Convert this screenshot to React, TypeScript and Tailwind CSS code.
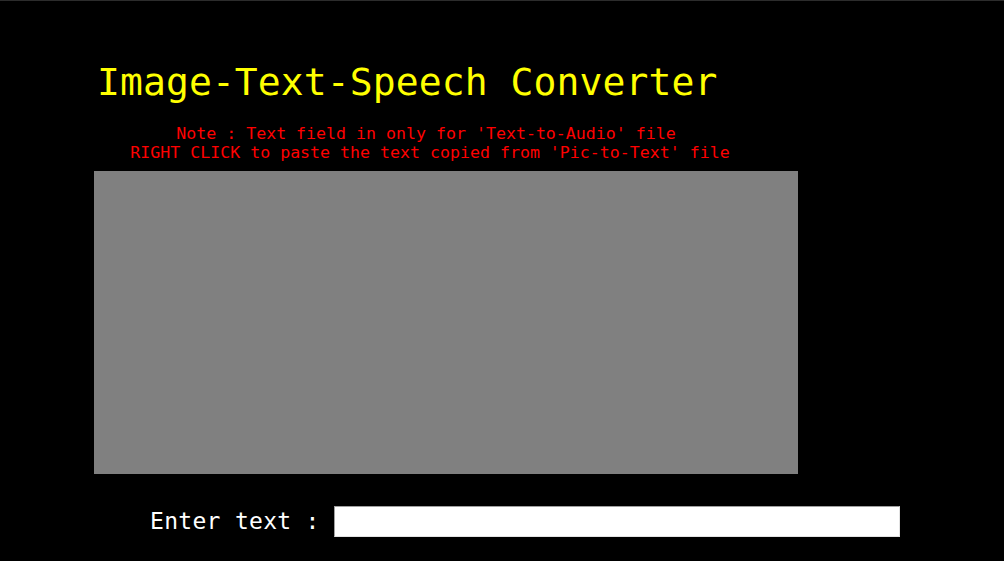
import React, { useState } from "react";

const mono = { fontFamily: '"DejaVu Sans Mono", "Liberation Mono", monospace' };

const App: React.FC = () => {
  const [text, setText] = useState<string>("");

  return (
    <div
      className="w-[1004px] h-[561px] bg-black border-t border-[#2c2c2c] overflow-hidden flex flex-col"
      style={mono}
    >
      <div className="pl-[94px] pt-[62px] flex flex-col">
        <h1 className="ml-[3px] text-[38px] leading-[38px] text-[#ffff00] tracking-[0.1px]">
          Image-Text-Speech Converter
        </h1>
        <div className="mt-[23px] w-[672px] text-center text-[#ff0000] text-[16.6px] leading-[19px]">
          <p className="pr-[8px]">Note : Text field in only for 'Text-to-Audio' file</p>
          <p>RIGHT CLICK to paste the text copied from 'Pic-to-Text' file</p>
        </div>
        <div className="mt-[9px] w-[704px] h-[303px] bg-[#808080]" />
        <div className="mt-[32px] flex items-center">
          <label
            htmlFor="entry"
            className="ml-[56px] w-[184px] text-white text-[23px] leading-[31px] tracking-[0.3px]"
          >
            Enter text :
          </label>
          <input
            id="entry"
            value={text}
            onChange={(e) => setText(e.target.value)}
            className="w-[566px] h-[31px] bg-white border border-t-[#a0a0a0] border-l-[#a0a0a0] border-b-[#e3e3e3] border-r-[#e3e3e3] outline-none px-1 text-black"
          />
        </div>
      </div>
    </div>
  );
};

export default App;
